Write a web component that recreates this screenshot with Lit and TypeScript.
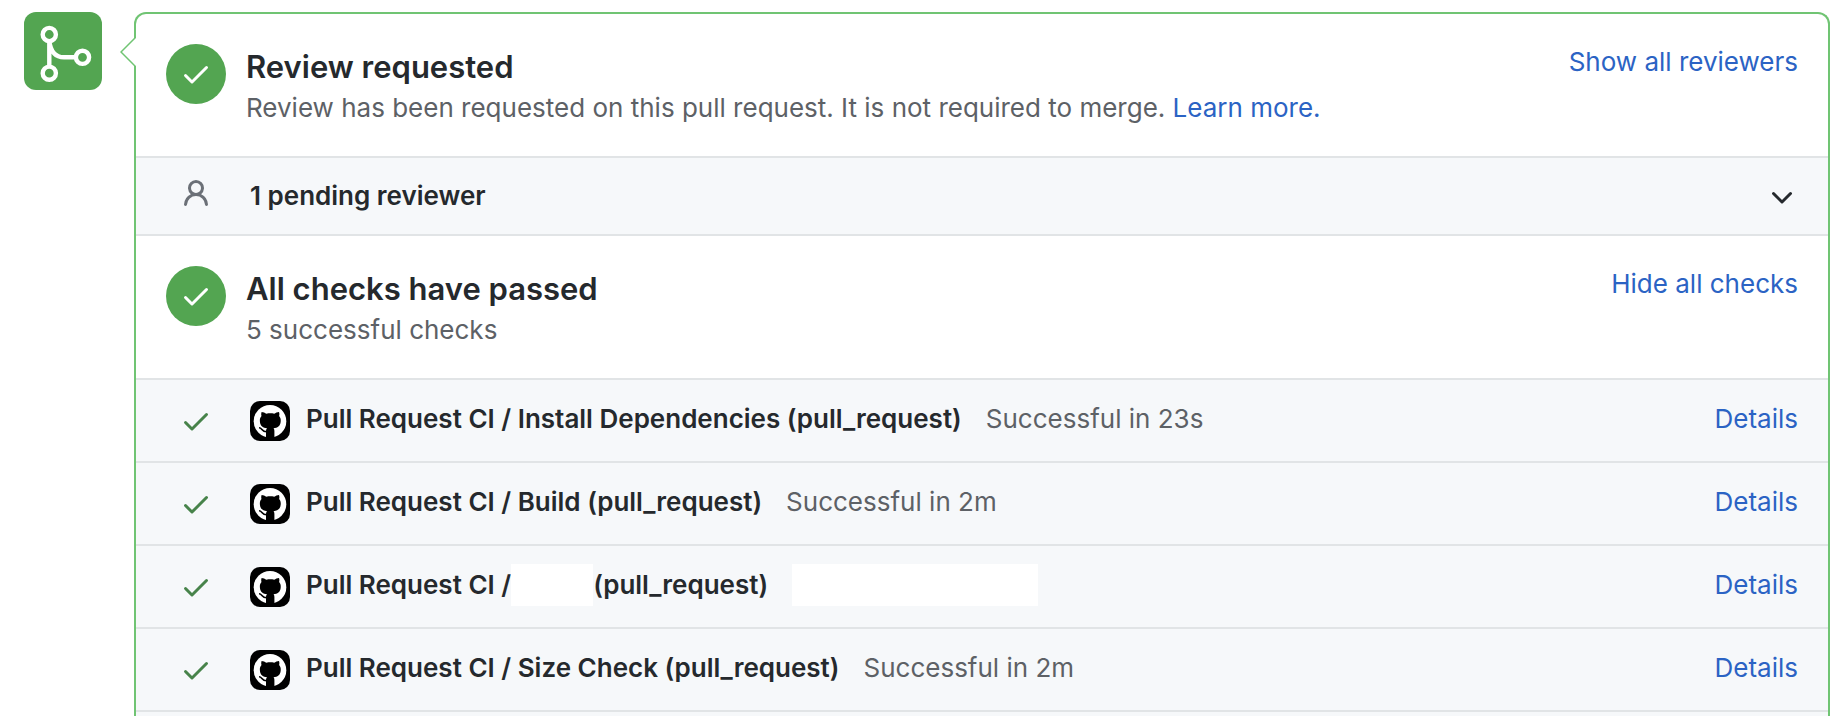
import { LitElement, html, css, svg, nothing } from "lit";
import { customElement, property, state } from "lit/decorators.js";

interface Check {
  prefix: string;
  name?: string;
  event: string;
  status?: string;
}

const CHECKS: Check[] = [
  { prefix: "Pull Request CI /", name: "Install Dependencies", event: "(pull_request)", status: "Successful in 23s" },
  { prefix: "Pull Request CI /", name: "Build", event: "(pull_request)", status: "Successful in 2m" },
  { prefix: "Pull Request CI /", event: "(pull_request)" },
  { prefix: "Pull Request CI /", name: "Size Check", event: "(pull_request)", status: "Successful in 2m" },
];

const ICONS = {
  check: "M13.78 4.22a.75.75 0 010 1.06l-7.25 7.25a.75.75 0 01-1.06 0L2.22 9.28a.75.75 0 011.06-1.06L6 10.94l6.72-6.72a.75.75 0 011.06 0z",
  person: "M10.5 5a2.5 2.5 0 11-5 0 2.5 2.5 0 015 0zm.061 3.073a4 4 0 10-5.123 0 6.004 6.004 0 00-3.431 5.142.75.75 0 001.498.07 4.5 4.5 0 018.99 0 .75.75 0 101.498-.07 6.005 6.005 0 00-3.432-5.142z",
  chevron: "M12.78 6.22a.75.75 0 010 1.06l-4.25 4.25a.75.75 0 01-1.06 0L3.22 7.28a.75.75 0 011.06-1.06L8 9.94l3.72-3.72a.75.75 0 011.06 0z",
  cat: "M11.6 11C13.2 11 15.2 12 16.4 12.8C18.8 12.2 21.8 12.2 24.2 12.8C25.4 12 27.4 11 29 11C29.6 12.8 29.4 14.3 29.1 15.1C30.5 16.7 30.9 18.4 30.7 20.4C30.3 25.2 27.4 26.8 23.6 27.2C24.2 28 24.4 29 24.4 30V37H16V30C16 29 16.3 28 17 27.2C13.2 26.8 10.3 25.2 9.9 20.4C9.7 18.4 10.1 16.7 11.5 15.1C11.2 14.3 11 12.8 11.6 11Z",
};

const icon = (d: string) => html`<svg class="icon" viewBox="0 0 16 16" aria-hidden="true">${svg`<path d=${d} fill="currentColor"></path>`}</svg>`;

const shared = css`
  .icon {
    display: block;
    width: 32px;
    height: 32px;
    flex: none;
  }
  a,
  button {
    font: inherit;
    color: #2b63c4;
    text-decoration: none;
    white-space: nowrap;
  }
  button {
    border: 0;
    padding: 0;
    background: none;
    cursor: pointer;
  }
  a:hover {
    text-decoration: underline;
  }
`;

@customElement("status-header")
export class StatusHeader extends LitElement {
  @property() heading = "";
  @property() action = "";

  static styles = [
    shared,
    css`
      :host {
        display: flex;
        align-items: flex-start;
        gap: 20px;
        padding: 28px 30px;
      }
      .circle {
        display: grid;
        place-items: center;
        flex: none;
        width: 60px;
        height: 60px;
        margin-top: 2px;
        border-radius: 50%;
        background: #53a551;
        color: #fff;
      }
      .body {
        flex: 1;
        min-width: 0;
        margin-top: 4px;
      }
      h3 {
        margin: 0;
        font-size: 31px;
        line-height: 42px;
        font-weight: 600;
        color: #25292d;
      }
      .sub {
        color: #5d6166;
      }
    `,
  ];

  render() {
    return html`
      <span class="circle">${icon(ICONS.check)}</span>
      <div class="body">
        <h3>${this.heading}</h3>
        <div class="sub"><slot></slot></div>
      </div>
      <button type="button" @click=${() => this.dispatchEvent(new CustomEvent("toggle"))}>${this.action}</button>
    `;
  }
}

@customElement("check-row")
export class CheckRow extends LitElement {
  @property({ attribute: false }) check!: Check;

  static styles = [
    shared,
    css`
      :host {
        display: flex;
        align-items: center;
        min-height: 81px;
        padding: 0 30px 0 44px;
        border-bottom: 2px solid #e1e4e6;
      }
      .tick {
        color: #47834a;
      }
      .avatar {
        display: block;
        flex: none;
        width: 40px;
        height: 40px;
        margin: 0 16px 0 38px;
      }
      .text {
        display: flex;
        align-items: center;
        flex: 1;
        min-width: 0;
        white-space: nowrap;
      }
      .text,
      a {
        padding-bottom: 4px;
      }
      strong {
        display: flex;
        align-items: center;
        font-weight: 600;
        color: #25292d;
      }
      .status {
        margin-left: 24px;
        color: #5d6166;
      }
      .blank {
        width: 82px;
        height: 42px;
        background: #fff;
      }
      .blank.wide {
        width: 246px;
        margin-left: 24px;
      }
    `,
  ];

  render() {
    const { prefix, name, event, status } = this.check;
    return html`
      <span class="tick">${icon(ICONS.check)}</span>
      <svg class="avatar" viewBox="0 0 40 40" role="img" aria-label="GitHub Actions">
        <rect width="40" height="40" rx="10" fill="#000"></rect>
        <circle cx="20" cy="20.2" r="16.3" fill="#fff"></circle>
        <path d=${ICONS.cat} fill="#000"></path>
        <path d="M9 26.8C12.4 26.8 11.6 31.2 17 30.8" fill="none" stroke="#000" stroke-width="1.6"></path>
      </svg>
      <div class="text">
        <strong>${name ? `${prefix} ${name} ${event}` : html`${prefix}<span class="blank"></span>${event}`}</strong>
        ${status ? html`<span class="status">${status}</span>` : html`<span class="blank wide"></span>`}
      </div>
      <a href="#details">Details</a>
    `;
  }
}

@customElement("app-root")
export class AppRoot extends LitElement {
  @state() private showChecks = true;

  static styles = [
    shared,
    css`
      :host {
        display: flex;
        align-items: stretch;
        gap: 32px;
        box-sizing: border-box;
        height: 100vh;
        overflow: hidden;
        padding: 12px 18px 0 24px;
        background: #fff;
        font-family: Inter, "Liberation Sans", sans-serif;
        font-size: 26px;
        line-height: 40px;
      }
      .badge {
        display: block;
        flex: none;
        width: 78px;
        height: 78px;
        border-radius: 12px;
        background: #53a551;
      }
      .box {
        position: relative;
        display: flex;
        flex-direction: column;
        flex: 1;
        min-width: 0;
        border: 2px solid #70c473;
        border-bottom: 0;
        border-radius: 12px 12px 0 0;
      }
      .caret {
        position: absolute;
        top: 23px;
        left: -16px;
        width: 16px;
        height: 30px;
      }
      .reviewers {
        display: flex;
        align-items: center;
        height: 76px;
        padding: 0 30px 0 44px;
        border: solid #e1e4e6;
        border-width: 2px 0;
        background: #f6f8fa;
      }
      .reviewers strong {
        flex: 1;
        margin-left: 38px;
        font-weight: 600;
        color: #25292d;
      }
      .person {
        color: #6b7077;
        padding-bottom: 4px;
      }
      .reviewers button {
        color: #25292d;
      }
      .checks {
        flex: 1;
        border-top: 2px solid #e1e4e6;
        background: #f6f8fa;
      }
    `,
  ];

  render() {
    return html`
      <svg class="badge" viewBox="0 0 78 78" role="img" aria-label="Merge status">
        <g fill="none" stroke="#fff" stroke-width="4.4">
          <circle cx="25.3" cy="22.5" r="6.6"></circle>
          <circle cx="25.3" cy="61.2" r="6.6"></circle>
          <circle cx="58.5" cy="45.3" r="6.6"></circle>
          <path d="M25.3 29V54.5M25.3 29C26.5 38.5 31 45.3 40 45.3H52"></path>
        </g>
      </svg>
      <section class="box">
        <svg class="caret" viewBox="0 0 16 30" aria-hidden="true">
          <path d="M16 1H15L1 15L15 29H16Z" fill="#fff"></path>
          <path d="M15.5 0.5L1 15L15.5 29.5" fill="none" stroke="#70c473" stroke-width="1.5"></path>
        </svg>
        <status-header heading="Review requested" action="Show all reviewers">
          Review has been requested on this pull request. It is not required to merge.
          <a href="#learn-more">Learn more.</a>
        </status-header>
        <div class="reviewers">
          <span class="person">${icon(ICONS.person)}</span>
          <strong>1 pending reviewer</strong>
          <button type="button" aria-label="Expand reviewers">${icon(ICONS.chevron)}</button>
        </div>
        <status-header
          heading="All checks have passed"
          action=${this.showChecks ? "Hide all checks" : "Show all checks"}
          @toggle=${() => (this.showChecks = !this.showChecks)}
        >
          5 successful checks
        </status-header>
        ${this.showChecks
          ? html`<div class="checks">${CHECKS.map((c) => html`<check-row .check=${c}></check-row>`)}</div>`
          : nothing}
      </section>
    `;
  }
}
